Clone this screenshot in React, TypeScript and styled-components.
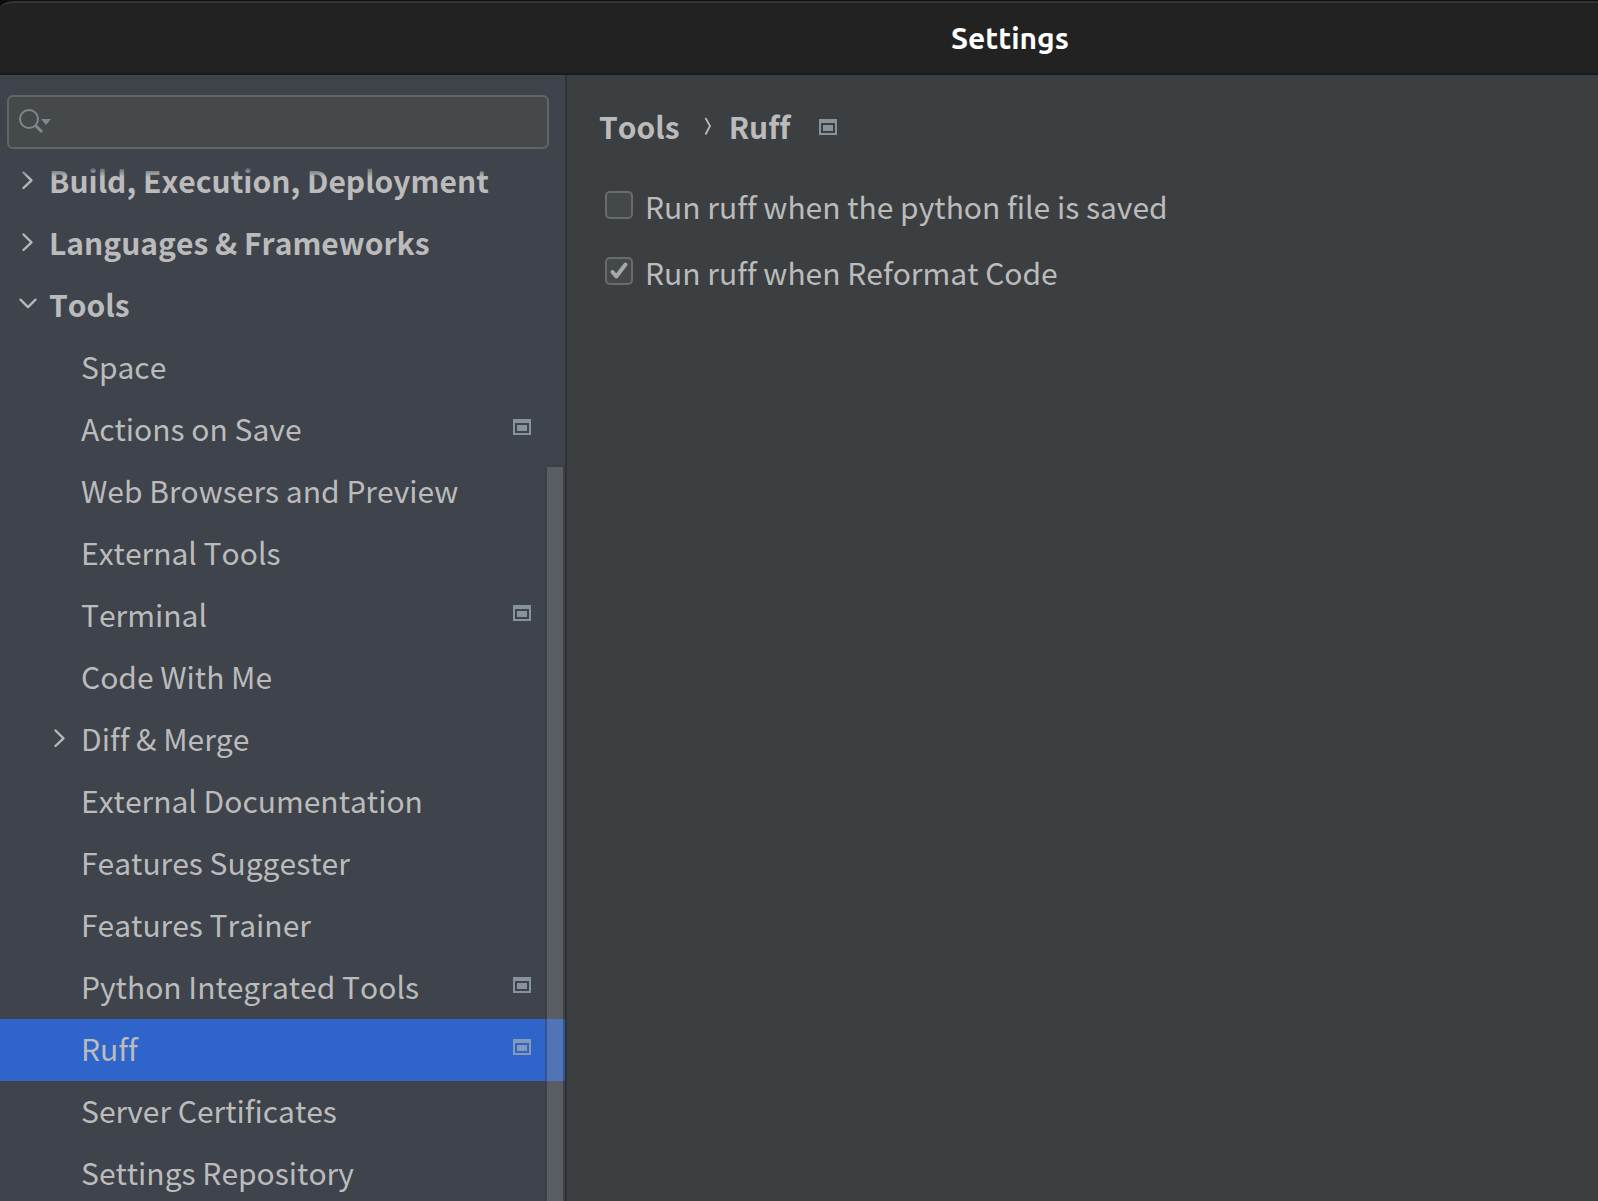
import React, { useState } from "react";
import styled, { createGlobalStyle } from "styled-components";

const GlobalStyle = createGlobalStyle`
  *, *::before, *::after { box-sizing: border-box; }
  body {
    margin: 0;
    background: #3c3f41;
    color: #bbbbbb;
    font-family: "Noto Sans CJK SC", "Noto Sans", sans-serif;
    font-size: 30px;
    font-kerning: none;
    font-variant-ligatures: none;
  }
  button, input { font: inherit; font-kerning: none; font-variant-ligatures: none; color: inherit; }
`;

const Window = styled.div`
  display: flex;
  flex-direction: column;
  height: 100vh;
  overflow: hidden;
  background: #0d0d0d;
`;

const TitleBar = styled.header`
  flex: none;
  display: flex;
  align-items: center;
  justify-content: center;
  height: 74px;
  margin-top: 1px;
  padding-left: 422px;
  background: #222222;
  border-top: 2px solid #343434;
  border-bottom: 2px solid #18191a;
  border-top-left-radius: 14px 8px;
`;

const Title = styled.h1`
  margin: 0;
  color: #ffffff;
  font-family: Ubuntu, "Noto Sans", sans-serif;
  font-size: 30px;
  font-weight: 700;
  line-height: 40px;
`;

const Body = styled.div`
  flex: 1;
  display: flex;
  min-height: 0;
`;

const Sidebar = styled.aside`
  flex: none;
  display: flex;
  flex-direction: column;
  width: 567px;
  padding-top: 20px;
  background: #3e434c;
  border-right: 2px solid #323232;
`;

const SearchField = styled.label`
  flex: none;
  display: flex;
  align-items: center;
  height: 54px;
  margin: 0 16px 2px 7px;
  padding: 0 10px;
  gap: 8px;
  background: #45494a;
  border: 2px solid #646464;
  border-radius: 6px;
`;

const SearchInput = styled.input`
  flex: 1;
  min-width: 0;
  height: 40px;
  padding: 0;
  background: transparent;
  border: 0;
  outline: none;
`;

const TreeViewport = styled.nav`
  position: relative;
  flex: 1;
  min-height: 0;
  overflow: hidden;

  &::before {
    content: "";
    position: absolute;
    inset: 0 0 auto;
    height: 26px;
    background: linear-gradient(#3e434c 50%, rgba(62, 67, 76, 0));
    pointer-events: none;
  }
`;

const Tree = styled.ul`
  margin: 0;
  padding: 0;
  list-style: none;
`;

const TreeRow = styled.button<{ $level: number; $selected: boolean }>`
  display: flex;
  align-items: center;
  width: 100%;
  height: 62px;
  padding: 0 34px 0 ${(p) => 12 + p.$level * 32}px;
  background: ${(p) => (p.$selected ? "#2f65ca" : "transparent")};
  border: 0;
  text-align: left;
  cursor: default;
`;

const Arrow = styled.span`
  flex: none;
  display: flex;
  width: 37px;
`;

const RowLabel = styled.span<{ $bold: boolean }>`
  flex: 1;
  padding-bottom: 4px;
  font-weight: ${(p) => (p.$bold ? 700 : 400)};
  line-height: 44px;
  white-space: nowrap;
`;

const ScrollThumb = styled.div`
  position: absolute;
  top: 314px;
  right: 0;
  bottom: -2px;
  width: 20px;
  background: rgba(144, 145, 147, 0.35);
  background-clip: padding-box;
  border: 2px solid rgba(56, 56, 56, 0.35);
  pointer-events: none;
`;

const Content = styled.main`
  flex: 1;
  min-width: 0;
  padding: 29px 32px;
  background: #3c3f41;
`;

const Breadcrumb = styled.h2`
  display: flex;
  align-items: center;
  margin: 0 0 36px;
  font-size: 30px;
  font-weight: 700;
  line-height: 44px;
`;

const Separator = styled.span`
  display: flex;
  margin: 0 17px 0 24px;
`;

const ProjectMark = styled.span`
  display: flex;
  margin: 8px 0 0 28px;
`;

const Options = styled.div`
  display: flex;
  flex-direction: column;
  gap: 22px;
  padding-left: 6px;
`;

const Option = styled.label`
  display: flex;
  align-items: center;
  align-self: flex-start;
  gap: 12px;
  line-height: 44px;
`;

const CheckFrame = styled.span`
  display: grid;
  margin-bottom: 2px;

  & > * { grid-area: 1 / 1; }
  & > svg { pointer-events: none; }
`;

const CheckInput = styled.input`
  appearance: none;
  width: 28px;
  height: 28px;
  margin: 0;
  background: #43494a;
  border: 2px solid #6b6b6b;
  border-radius: 5px;
`;

function Chevron({ open }: { open: boolean }) {
  return (
    <svg width="32" height="32" viewBox="0 0 32 32" fill="none" stroke="#b4b6b8" strokeWidth="2.4" strokeLinecap="round" strokeLinejoin="round" aria-hidden="true">
      <path d={open ? "M8.5 9.7 16 17.2 23.5 9.7" : "M11.5 6.5 19.5 14.3 11.5 22"} />
    </svg>
  );
}

function ProjectIcon() {
  return (
    <svg width="18" height="22" viewBox="0 0 18 22" fill="#9aa7b0" fillOpacity="0.8" aria-hidden="true">
      <path fillRule="evenodd" d="M0 0H18V16H0ZM2 4V14H16V4Z" />
      <path d="M4 6H14V12H4Z" />
    </svg>
  );
}

function SearchIcon() {
  return (
    <svg width="34" height="28" viewBox="0 0 34 28" fill="none" aria-hidden="true">
      <circle cx="10" cy="11" r="9" stroke="#7d888f" strokeWidth="2" />
      <path d="M16.5 17.5 23 24" stroke="#7d888f" strokeWidth="3" />
      <path d="M22 11H32L27 17Z" fill="#7d888f" />
    </svg>
  );
}

type Item = { name: string; level: number; arrow?: "open" | "closed"; project?: boolean };

const items: Item[] = [
  { name: "Build, Execution, Deployment", level: 0, arrow: "closed" },
  { name: "Languages & Frameworks", level: 0, arrow: "closed" },
  { name: "Tools", level: 0, arrow: "open" },
  { name: "Space", level: 1 },
  { name: "Actions on Save", level: 1, project: true },
  { name: "Web Browsers and Preview", level: 1 },
  { name: "External Tools", level: 1 },
  { name: "Terminal", level: 1, project: true },
  { name: "Code With Me", level: 1 },
  { name: "Diff & Merge", level: 1, arrow: "closed" },
  { name: "External Documentation", level: 1 },
  { name: "Features Suggester", level: 1 },
  { name: "Features Trainer", level: 1 },
  { name: "Python Integrated Tools", level: 1, project: true },
  { name: "Ruff", level: 1, project: true },
  { name: "Server Certificates", level: 1 },
  { name: "Settings Repository", level: 1 },
];

function CheckOption({ label, initial }: { label: string; initial: boolean }) {
  const [checked, setChecked] = useState(initial);
  return (
    <Option>
      <CheckFrame>
        <CheckInput type="checkbox" checked={checked} onChange={(e) => setChecked(e.target.checked)} />
        {checked && (
          <svg width="28" height="28" viewBox="0 0 28 28" fill="none" stroke="#a7a7a7" strokeWidth="4" strokeLinecap="round" strokeLinejoin="round" aria-hidden="true">
            <path d="M7.5 15 11.3 19.5 20.5 7.5" />
          </svg>
        )}
      </CheckFrame>
      {label}
    </Option>
  );
}

export default function App() {
  const [selected, setSelected] = useState("Ruff");
  return (
    <>
      <GlobalStyle />
      <Window>
        <TitleBar>
          <Title>Settings</Title>
        </TitleBar>
        <Body>
          <Sidebar>
            <SearchField>
              <SearchIcon />
              <SearchInput type="text" aria-label="Search settings" />
            </SearchField>
            <TreeViewport>
              <Tree>
                {items.map((item) => (
                  <li key={item.name}>
                    <TreeRow type="button" $level={item.level} $selected={item.name === selected} onClick={() => setSelected(item.name)}>
                      <Arrow>{item.arrow && <Chevron open={item.arrow === "open"} />}</Arrow>
                      <RowLabel $bold={item.level === 0}>{item.name}</RowLabel>
                      {item.project && <ProjectIcon />}
                    </TreeRow>
                  </li>
                ))}
              </Tree>
              <ScrollThumb />
            </TreeViewport>
          </Sidebar>
          <Content>
            <Breadcrumb>
              <span>Tools</span>
              <Separator>
                <svg width="8" height="22" viewBox="0 0 8 22" fill="none" stroke="#bbbbbb" strokeWidth="1.8" aria-hidden="true">
                  <path d="M1.5 3 6 11 1.5 19.5" />
                </svg>
              </Separator>
              <span>Ruff</span>
              <ProjectMark>
                <ProjectIcon />
              </ProjectMark>
            </Breadcrumb>
            <Options>
              <CheckOption label="Run ruff when the python file is saved" initial={false} />
              <CheckOption label="Run ruff when Reformat Code" initial />
            </Options>
          </Content>
        </Body>
      </Window>
    </>
  );
}
